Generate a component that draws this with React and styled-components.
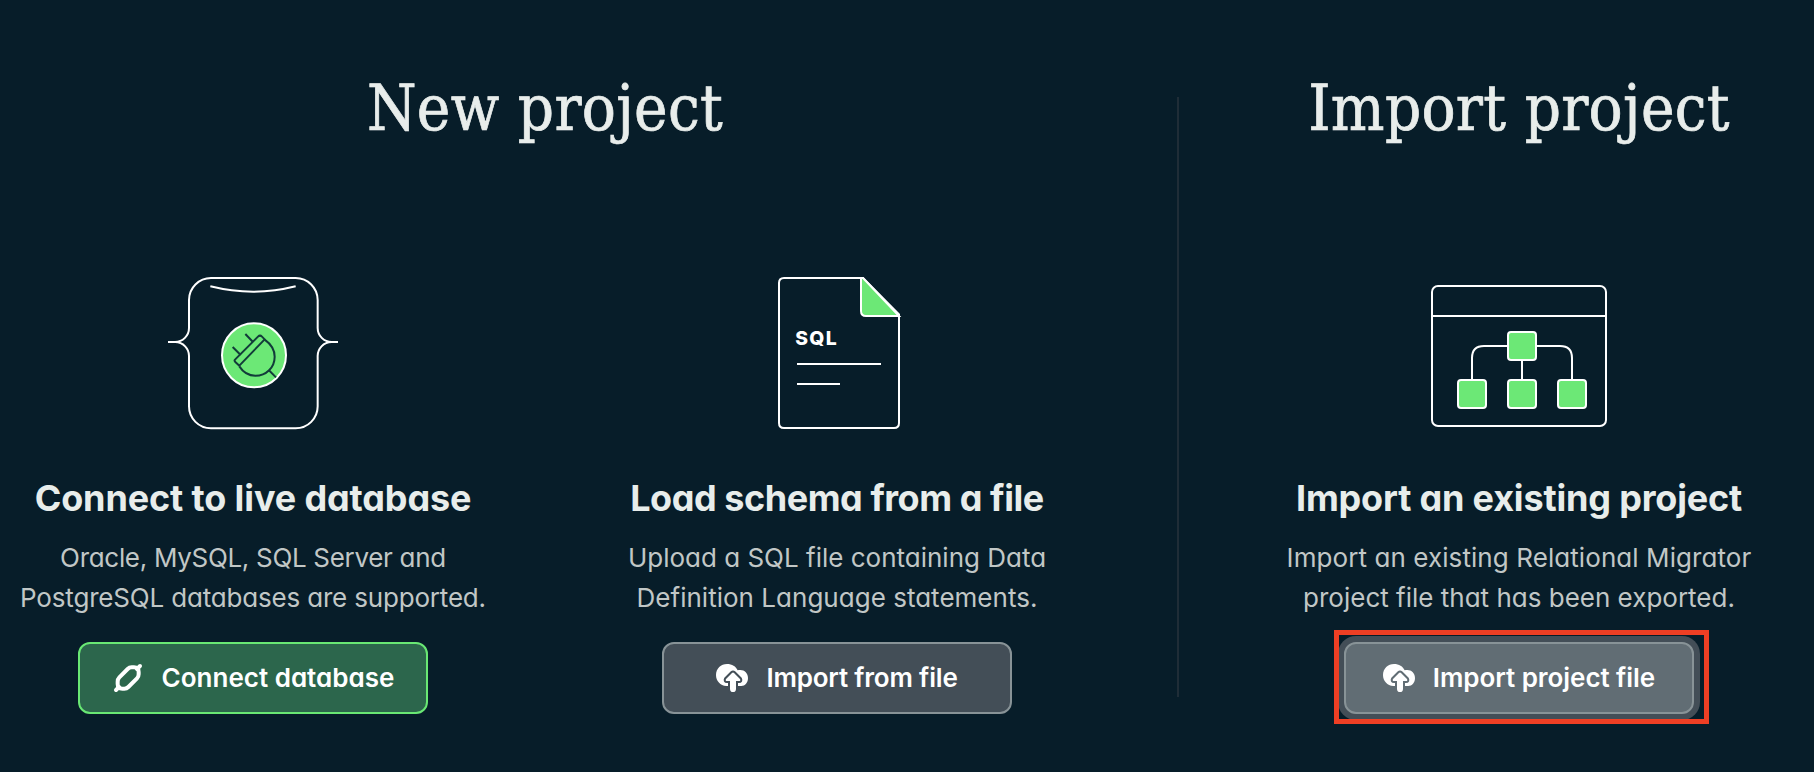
import React from "react";
import styled, { createGlobalStyle } from "styled-components";

const GREEN = "#6ce876";

const GlobalStyle = createGlobalStyle`
  *, *::before, *::after { box-sizing: border-box; }
  body {
    margin: 0;
    background: #071d29;
    overflow: hidden;
    font-family: Inter, "Liberation Sans", sans-serif;
    font-feature-settings: "cv11";
  }
`;

const Page = styled.main`
  display: flex;
  gap: 100px;
  width: 1814px;
  height: 772px;
  padding: 67px 0 0 13px;
  background: #071d29;
`;

const Section = styled.section`
  display: flex;
  flex-direction: column;
  flex: none;
`;

const SectionTitle = styled.h1`
  margin: 0;
  height: 80px;
  padding-top: 2px;
  font: 400 63px/80px "DejaVu Serif Condensed", "DejaVu Serif", serif;
  font-stretch: condensed;
  letter-spacing: ${(p) => p.$tracking}px;
  -webkit-text-stroke: 0.7px #e8edeb;
  color: #e8edeb;
  text-align: center;
  white-space: nowrap;
`;

const Cards = styled.div`
  display: flex;
  gap: 104px;
  margin-top: 113px;
`;

const Card = styled.article`
  display: flex;
  flex-direction: column;
  align-items: center;
  width: 480px;
`;

const Artwork = styled.div`
  display: flex;
  height: 180px;

  svg { display: block; }
`;

const CardTitle = styled.h2`
  margin: 34px 0 0;
  font-size: 36px;
  line-height: 48px;
  font-weight: 700;
  letter-spacing: ${(p) => p.$tracking}px;
  color: #e8edeb;
  white-space: nowrap;
`;

const Description = styled.p`
  margin: 16px 0 0;
  font-size: 26px;
  line-height: 40px;
  color: #c1c7c6;
  text-align: center;
  white-space: nowrap;
`;

const DescriptionLine = styled.span`
  display: block;
  letter-spacing: ${(p) => p.$tracking}px;
`;

const variants = {
  primary: { bg: "#2c664c", border: "#69e874", halo: "none" },
  neutral: { bg: "#434e57", border: "#889397", halo: "none" },
  focused: { bg: "#616d74", border: "#889397", halo: "0 0 0 6px #434e57" },
};

const Button = styled.button`
  display: flex;
  align-items: center;
  justify-content: center;
  gap: 18px;
  width: 350px;
  height: 72px;
  margin: 0;
  padding: 0;
  border: 2px solid ${(p) => variants[p.$variant].border};
  border-radius: 12px;
  background: ${(p) => variants[p.$variant].bg};
  box-shadow: ${(p) => variants[p.$variant].halo};
  color: #fff;
  font: 600 26px/32px Inter, sans-serif;
  font-feature-settings: "cv11";
  letter-spacing: ${(p) => p.$tracking}px;
  white-space: nowrap;

  svg { flex: none; display: block; }
`;

const Action = styled.div`
  position: relative;
  margin-top: 24px;
`;

const Highlight = styled.div`
  position: absolute;
  inset: -12px -15px -10px -10px;
  border: 5px solid #ee3f24;
`;

const Divider = styled.div`
  flex: none;
  width: 2px;
  height: 600px;
  margin-top: 30px;
  background: #1f2d37;
`;

const DatabaseArt = () => (
  <svg width="210" height="180" viewBox="-6 0 630 540" fill="none" stroke="#fff" strokeWidth="6">
    <path d="M183 54H437A66 66 0 0 1 503 120V204A42 42 0 0 0 545 246H564H545A42 42 0 0 0 503 290V439A66 66 0 0 1 437 505H183A66 66 0 0 1 117 439V290A42 42 0 0 0 75 246H54H75A42 42 0 0 0 117 204V120A66 66 0 0 1 183 54Z" />
    <path d="M181 79Q310 111 437 79" />
    <circle cx="312" cy="286" r="96" fill={GREEN} />
    <g stroke="#123c3a">
      <path d="M255 299L324 230Q330 224 336 230L344 238L268 317L256 306Q252 302 255 299Z" strokeLinejoin="round" />
      <path d="M344 239C365 254 374 270 374 290C374 322 349 347 316 347C297 347 279 336 268 319" />
      <path d="M286 222L309 246M248 261L272 285M356 330L378 352" />
    </g>
  </svg>
);

const ArtLabel = styled.text`
  font: 800 58px Inter, sans-serif;
  fill: #fff;
  stroke: none;
`;

const SqlFileArt = () => (
  <svg width="200" height="180" viewBox="-9 0 600 540" fill="none" stroke="#fff" strokeWidth="6">
    <path d="M369 54H132Q117 54 117 69V489Q117 504 132 504H462Q477 504 477 489V163Z" />
    <path d="M363 54V153Q363 168 378 168H477L369 54Z" fill={GREEN} />
    <ArtLabel x="166" y="255" textLength="124" lengthAdjust="spacing">SQL</ArtLabel>
    <path d="M171 312H423M171 372H300" />
  </svg>
);

const nodes = [[294, 186], [144, 330], [294, 330], [444, 330]];

const DiagramArt = () => (
  <svg width="220" height="180" viewBox="-3 0 660 540" fill="none" stroke="#fff" strokeWidth="6">
    <rect x="66" y="78" width="522" height="420" rx="18" />
    <path d="M66 168H588M186 360V294Q186 258 222 258H450Q486 258 486 294V360M336 258V360" />
    {nodes.map(([x, y]) => (
      <rect key={`${x}-${y}`} x={x} y={y + 30} width="84" height="84" rx="9" fill={GREEN} />
    ))}
  </svg>
);

const ConnectIcon = () => (
  <svg width="32" height="32" viewBox="0 0 96 96" fill="none" stroke="#fff">
    <path
      d="M22 46L47 21Q52 16 59 16H66Q80 16 80 30V37Q80 44 75 49L49 75Q44 80 37 80H31Q17 80 17 66V59Q17 51 22 46Z"
      strokeWidth="12"
    />
    <path d="M75 21L84 12M21 75L12 84" strokeWidth="12" strokeLinecap="round" />
  </svg>
);

const CloudUploadIcon = ({ cutout }) => (
  <svg width="32" height="32" viewBox="0 0 96 96">
    <path
      fill="#fff"
      d="M33 6C15 6 0 20 0 39C0 57 13 71 31 72H76C87 72 96 62 96 48C96 34 86 24 73 24C70 24 68 24 65 25C60 13 48 6 33 6Z"
    />
    <path
      fill="#fff"
      stroke={cutout}
      strokeWidth="12"
      strokeLinejoin="round"
      paintOrder="stroke"
      d="M48 33Q51 30 54 33L72 51Q75 57 69 57H60V80Q60 90 51 90Q42 90 42 80V57H33Q27 57 30 51Z"
    />
  </svg>
);

const CardContent = ({ art, title, tracking, lines, action }) => (
  <Card>
    <Artwork>{art}</Artwork>
    <CardTitle $tracking={tracking}>{title}</CardTitle>
    <Description>
      {lines.map(([text, spacing]) => (
        <DescriptionLine key={text} $tracking={spacing}>{text}</DescriptionLine>
      ))}
    </Description>
    <Action>{action}</Action>
  </Card>
);

export default function App() {
  return (
    <>
      <GlobalStyle />
      <Page>
        <Section>
          <SectionTitle $tracking={0.3}>New project</SectionTitle>
          <Cards>
            <CardContent
              art={<DatabaseArt />}
              title="Connect to live database"
              tracking={-0.12}
              lines={[
                ["Oracle, MySQL, SQL Server and", -0.31],
                ["PostgreSQL databases are supported.", -0.18],
              ]}
              action={
                <Button $variant="primary" $tracking={0}>
                  <ConnectIcon />
                  Connect database
                </Button>
              }
            />
            <CardContent
              art={<SqlFileArt />}
              title="Load schema from a file"
              tracking={-0.45}
              lines={[
                ["Upload a SQL file containing Data", 0],
                ["Definition Language statements.", 0.02],
              ]}
              action={
                <Button $variant="neutral" $tracking={-0.18}>
                  <CloudUploadIcon cutout="#434e57" />
                  Import from file
                </Button>
              }
            />
          </Cards>
        </Section>
        <Divider />
        <Section>
          <SectionTitle $tracking={0.3}>Import project</SectionTitle>
          <Cards>
            <CardContent
              art={<DiagramArt />}
              title="Import an existing project"
              tracking={-0.18}
              lines={[
                ["Import an existing Relational Migrator", 0.08],
                ["project file that has been exported.", 0],
              ]}
              action={
                <>
                  <Button $variant="focused" $tracking={-0.05}>
                    <CloudUploadIcon cutout="#616d74" />
                    Import project file
                  </Button>
                  <Highlight />
                </>
              }
            />
          </Cards>
        </Section>
      </Page>
    </>
  );
}
